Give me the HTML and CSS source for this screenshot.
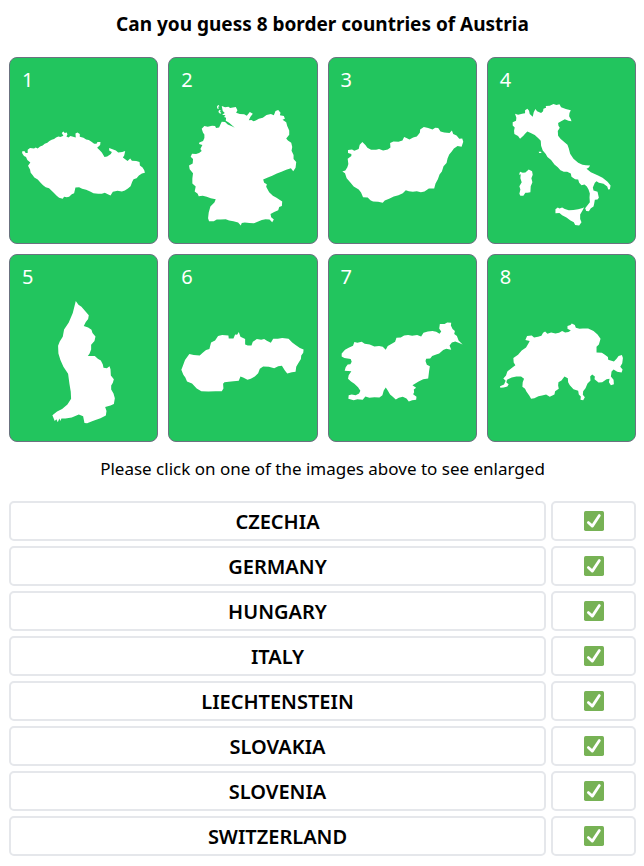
FILE: index.html
```html
<!DOCTYPE html>
<html lang="en">
<head>
  <meta charset="UTF-8" />
  <meta name="viewport" content="width=device-width, initial-scale=1" />
  <title>Border countries of Austria</title>
  <link rel="stylesheet" href="styles.css">
</head>
<body>
  <svg class="sprite" aria-hidden="true">
    <symbol id="check" viewBox="0 0 36 36">
      <rect width="36" height="36" rx="3" fill="#77b255" />
      <path d="M7.8 20.8L15 27.2L27.6 8.2" fill="none" stroke="#fff" stroke-width="5" stroke-linecap="round" stroke-linejoin="round" />
    </symbol>
  </svg>

  <main>
    <h1>Can you guess 8 border countries of Austria</h1>

    <section class="cards">
      <button class="card" type="button">
        <span class="number">1</span>
        <svg class="map" viewBox="42 141 369 369" aria-hidden="true">
          <path d="M42 286L49 285L53 291L59 291L59 281L66 276L78 277L83 274L89 277L96 271L104 268L110 263L118 260L124 255L131 251L138 249L144 244L151 241L157 243L166 239L161 231L166 226L170 231L176 229L178 235L175 241L181 244L187 240L203 244L202 232L208 229L215 234L215 242L226 245L234 250L242 252L250 257L258 263L265 263L268 258L277 258L276 267L267 275L274 282L281 289L289 303L297 301L308 294L311 288L303 283L303 276L311 279L323 283L330 289L342 288L351 285L348 298L344 304L353 311L358 315L366 307L371 314L384 315L394 318L395 328L403 334L408 342L410 350L401 352L392 358L385 366L376 369L372 377L367 390L359 397L350 403L341 406L328 404L314 407L307 418L299 414L290 410L281 413L270 413L256 411L246 406L234 401L222 398L213 393L202 394L200 403L198 411L191 414L183 422L176 423L168 422L164 428L153 425L145 418L137 410L130 403L123 396L113 393L105 387L97 379L89 370L79 364L73 356L68 350L66 340L60 329L67 319L58 312L54 303L48 300L43 292Z" />
        </svg>
      </button>
      <button class="card" type="button">
        <span class="number">2</span>
        <svg class="map" viewBox="43 141 369 369" aria-hidden="true">
          <path d="M165 150L175 154L185 152L190 156L207 153L212 163L208 170L219 174L232 175L240 179L249 168L258 173L251 182L246 193L254 192L260 196L268 193L276 188L288 185L299 177L312 174L321 178L326 165L334 162L341 170L339 178L351 180L354 188L347 191L358 199L361 210L367 223L367 236L358 247L363 253L373 260L376 273L374 284L380 297L380 309L388 318L386 335L379 345L372 336L358 341L344 347L330 352L316 359L303 364L289 370L292 380L300 384L298 392L307 408L318 419L329 425L346 436L345 449L337 452L334 462L322 467L311 473L313 483L321 490L316 498L308 490L296 489L285 491L274 496L261 501L248 500L234 499L225 500L222 508L214 499L200 495L187 493L177 489L161 490L150 490L141 495L127 495L124 486L126 469L131 451L143 439L147 429L132 426L120 422L108 419L96 420L93 413L84 406L87 391L77 382L77 367L79 351L69 339L67 328L78 322L79 309L72 302L76 293L88 294L97 291L105 285L101 279L107 267L97 264L98 259L109 255L113 246L113 235L109 230L105 218L113 210L123 212L136 209L145 210L148 216L157 214L162 203L165 197L175 198L183 205L197 211L204 215L187 200L177 194L178 185L172 183L176 178L166 176L174 171L168 165Z" />
          <path d="M151 150l5-3l2 4l-5 2l3 2l-1 4l-4-2zM157 162l6 2l-4 3l5 4l-4 2l-5-5z" />
        </svg>
      </button>
      <button class="card" type="button">
        <span class="number">3</span>
        <svg class="map" viewBox="44 141 369 369" aria-hidden="true">
          <path d="M48 346L57 343L63 333L66 324L64 308L75 300L75 294L65 291L65 282L77 280L84 284L97 279L100 266L108 258L117 267L123 275L134 281L149 281L158 279L170 283L184 280L192 274L191 261L201 256L216 257L228 253L233 243L240 246L249 250L260 244L271 241L280 230L281 220L292 213L305 216L318 220L326 215L335 216L342 226L353 229L369 231L376 223L380 234L390 238L398 248L407 247L410 257L405 272L393 270L382 277L375 287L368 295L363 307L360 321L351 330L346 346L339 355L334 369L327 382L323 397L307 397L294 406L283 408L271 405L259 407L247 405L238 402L229 411L216 417L202 421L188 428L175 433L169 440L155 437L140 436L132 432L124 424L110 423L104 409L97 400L82 391L72 379L61 366L56 351Z" />
        </svg>
      </button>
      <button class="card" type="button">
        <span class="number">4</span>
        <svg class="map" viewBox="45 141 369 369" aria-hidden="true">
          <path d="M90 173L99 176L111 173L120 172L120 163L127 158L132 164L134 174L143 182L146 169L151 159L156 166L168 171L174 166L175 158L183 155L182 150L194 149L205 144L214 147L223 145L228 154L242 159L257 163L253 171L252 181L257 190L259 196L250 194L239 190L228 196L219 201L220 209L224 215L218 225L219 239L226 248L239 259L247 266L251 277L255 293L265 308L279 320L292 326L302 327L315 328L310 335L304 338L317 348L337 357L352 365L367 377L376 388L374 399L369 400L366 391L355 383L341 380L334 375L329 380L323 394L325 403L337 407L341 425L337 430L329 431L327 442L325 451L317 456L311 465L303 464L300 456L307 447L314 438L313 424L314 412L310 400L305 391L298 385L289 387L282 380L279 370L270 369L259 362L257 352L246 347L236 347L226 342L218 333L208 325L198 312L187 303L182 294L173 283L168 269L167 254L159 246L149 237L137 231L127 226L120 233L115 239L105 248L99 240L88 234L87 224L89 214L83 208L83 199L93 194L94 185Z" />
          <path d="M105 347L113 350L121 349L131 340L141 345L143 356L139 366L142 378L137 390L136 408L127 410L121 410L115 419L106 419L103 413L106 400L103 390L110 378L106 366L107 354L102 356Z" />
          <path d="M211 459L218 454L223 457L231 454L239 458L251 462L265 461L279 459L293 455L297 453L292 463L285 475L285 488L289 498L282 508L270 506L266 498L256 493L244 484L231 477L223 470L211 471Z" />
          <path d="M161 287l7 0l1 4l-7 0z" />
        </svg>
      </button>
      <button class="card" type="button">
        <span class="number">5</span>
        <svg class="map" viewBox="42 141 369 369" aria-hidden="true">
          <path d="M203 144L211 155L220 161L229 172L242 187L240 198L233 207L227 219L240 223L250 230L253 240L262 250L259 264L249 275L249 289L244 302L239 309L260 309L269 317L278 322L284 334L286 344L296 345L304 339L307 348L308 367L317 378L314 389L309 397L309 409L316 421L320 435L317 452L307 457L291 461L295 473L293 487L277 495L262 500L250 505L237 510L229 509L225 489L212 484L191 493L172 496L160 496L157 503L154 496L149 507L145 498L140 503L133 486L147 475L162 467L178 454L189 437L188 416L184 392L180 362L166 341L157 321L151 301L150 278L155 265L164 251L168 229L182 208L194 180Z" />
        </svg>
      </button>
      <button class="card" type="button">
        <span class="number">6</span>
        <svg class="map" viewBox="43 141 369 369" aria-hidden="true">
          <path d="M68 303L81 306L99 307L108 299L118 291L128 288L133 268L145 262L154 249L166 246L185 247L186 256L200 256L205 244L211 245L216 237L221 251L235 258L235 274L243 277L254 277L258 266L270 258L283 260L292 258L300 263L312 269L319 257L333 257L346 255L365 257L376 268L386 276L399 285L410 289L409 299L403 307L402 318L394 330L388 341L386 356L375 357L361 361L354 352L345 338L334 339L322 345L306 341L289 340L279 347L274 360L264 370L252 377L242 380L229 373L221 370L216 383L200 384L186 386L173 387L169 392L170 406L165 414L146 414L125 415L104 414L90 406L76 391L61 385L56 373L50 365L44 350L49 337L55 321Z" />
        </svg>
      </button>
      <button class="card" type="button">
        <span class="number">7</span>
        <svg class="map" viewBox="44 141 369 369" aria-hidden="true">
          <path d="M46 301L56 290L67 284L80 278L84 267L93 269L106 266L115 272L130 274L144 280L158 279L169 281L178 290L184 279L196 272L206 266L210 254L223 253L233 247L245 246L257 248L272 246L284 250L291 239L304 235L318 234L329 236L339 242L344 235L338 226L340 213L354 213L362 208L374 209L373 217L378 228L385 234L383 243L391 249L396 262L408 274L396 269L386 265L376 268L369 277L374 290L359 287L350 291L338 301L327 305L317 309L311 316L299 317L297 324L301 335L310 339L308 352L305 376L290 378L275 386L258 396L269 404L262 409L263 417L260 423L270 431L269 440L257 441L247 445L240 436L229 431L217 434L208 439L199 431L191 424L184 412L178 403L172 412L168 426L159 433L144 432L129 434L117 430L109 440L93 438L82 441L66 437L67 426L76 424L88 426L98 421L102 413L95 402L84 392L74 385L65 377L67 366L75 354L55 353L58 342L64 334L72 333L76 326L73 318L54 315L46 310Z" />
        </svg>
      </button>
      <button class="card" type="button">
        <span class="number">8</span>
        <svg class="map" viewBox="45 141 369 369" aria-hidden="true">
          <path d="M121 261L126 249L140 247L147 253L159 251L169 248L174 239L180 235L187 242L198 238L211 241L222 239L231 234L240 238L250 237L257 232L247 227L247 219L256 216L260 211L269 216L272 224L283 227L293 226L309 226L325 234L337 244L346 257L341 274L334 281L334 298L350 299L359 305L368 312L369 320L386 325L394 317L400 309L410 306L413 315L411 330L405 341L412 349L409 358L396 356L385 349L379 355L377 370L385 380L386 393L377 396L371 387L373 377L364 378L351 387L340 388L328 378L329 370L321 364L315 370L316 382L307 391L301 405L294 414L293 425L299 432L294 441L286 440L287 430L281 424L279 413L265 408L254 396L249 387L248 375L238 370L229 382L220 387L219 397L221 407L210 414L208 424L194 431L183 424L171 427L160 429L148 435L138 437L133 428L124 415L120 407L112 401L113 387L117 377L108 370L94 370L80 373L66 380L64 388L71 393L67 400L56 403L46 404L45 399L57 394L62 383L55 376L63 367L67 355L82 343L91 336L86 328L85 315L99 305L110 292L123 283L130 271L134 264Z" />
        </svg>
      </button>
    </section>

    <p class="hint">Please click on one of the images above to see enlarged</p>

    <ul class="guesses">
      <li>
        <span class="country">CZECHIA</span>
        <span class="status"><svg role="img" aria-label="Correct"><use href="#check" /></svg></span>
      </li>
      <li>
        <span class="country">GERMANY</span>
        <span class="status"><svg role="img" aria-label="Correct"><use href="#check" /></svg></span>
      </li>
      <li>
        <span class="country">HUNGARY</span>
        <span class="status"><svg role="img" aria-label="Correct"><use href="#check" /></svg></span>
      </li>
      <li>
        <span class="country">ITALY</span>
        <span class="status"><svg role="img" aria-label="Correct"><use href="#check" /></svg></span>
      </li>
      <li>
        <span class="country">LIECHTENSTEIN</span>
        <span class="status"><svg role="img" aria-label="Correct"><use href="#check" /></svg></span>
      </li>
      <li>
        <span class="country">SLOVAKIA</span>
        <span class="status"><svg role="img" aria-label="Correct"><use href="#check" /></svg></span>
      </li>
      <li>
        <span class="country">SLOVENIA</span>
        <span class="status"><svg role="img" aria-label="Correct"><use href="#check" /></svg></span>
      </li>
      <li>
        <span class="country">SWITZERLAND</span>
        <span class="status"><svg role="img" aria-label="Correct"><use href="#check" /></svg></span>
      </li>
    </ul>
  </main>
</body>
</html>
```
FILE: styles.css
```css
* {
  margin: 0;
  padding: 0;
  box-sizing: border-box;
}
:root {
  --green: #22c55e;
  --card-border: #6b7280;
  --line: #e5e7eb;
}
body {
  background: #fff;
  color: #000;
  font-family: 'Segoe UI', 'Noto Sans', sans-serif;
}
.sprite {
  display: none;
}
main {
  padding: 8px 8px 8px 9px;
}
h1 {
  font-size: 19px;
  line-height: 32px;
  font-weight: 700;
  text-align: center;
  margin-bottom: 17px;
}
.cards {
  display: grid;
  grid-template-columns: repeat(4, 1fr);
  gap: 10px;
}
.card {
  display: flex;
  flex-direction: column;
  gap: 9px;
  padding: 8px 12px 17px;
  background: var(--green);
  border: 1px solid var(--card-border);
  border-radius: 8px;
  color: #fff;
  font-family: inherit;
  text-align: left;
  cursor: pointer;
}
.number {
  font-size: 20px;
  line-height: 28px;
}
.map {
  display: block;
  width: 100%;
  aspect-ratio: 1;
  fill: #fff;
}
.hint {
  font-size: 17px;
  line-height: 28px;
  text-align: center;
  margin: 13px 0 18px;
}
.guesses {
  display: flex;
  flex-direction: column;
  gap: 5px;
  list-style: none;
}
.guesses li {
  display: grid;
  grid-template-columns: 1fr 85px;
  gap: 5px;
}
.country,
.status {
  display: flex;
  align-items: center;
  justify-content: center;
  height: 40px;
  border: 2px solid var(--line);
  border-radius: 5px;
}
.country {
  padding-top: 2px;
  font-size: 20px;
  font-weight: 600;
}
.status svg {
  width: 20px;
  height: 20px;
}
```
